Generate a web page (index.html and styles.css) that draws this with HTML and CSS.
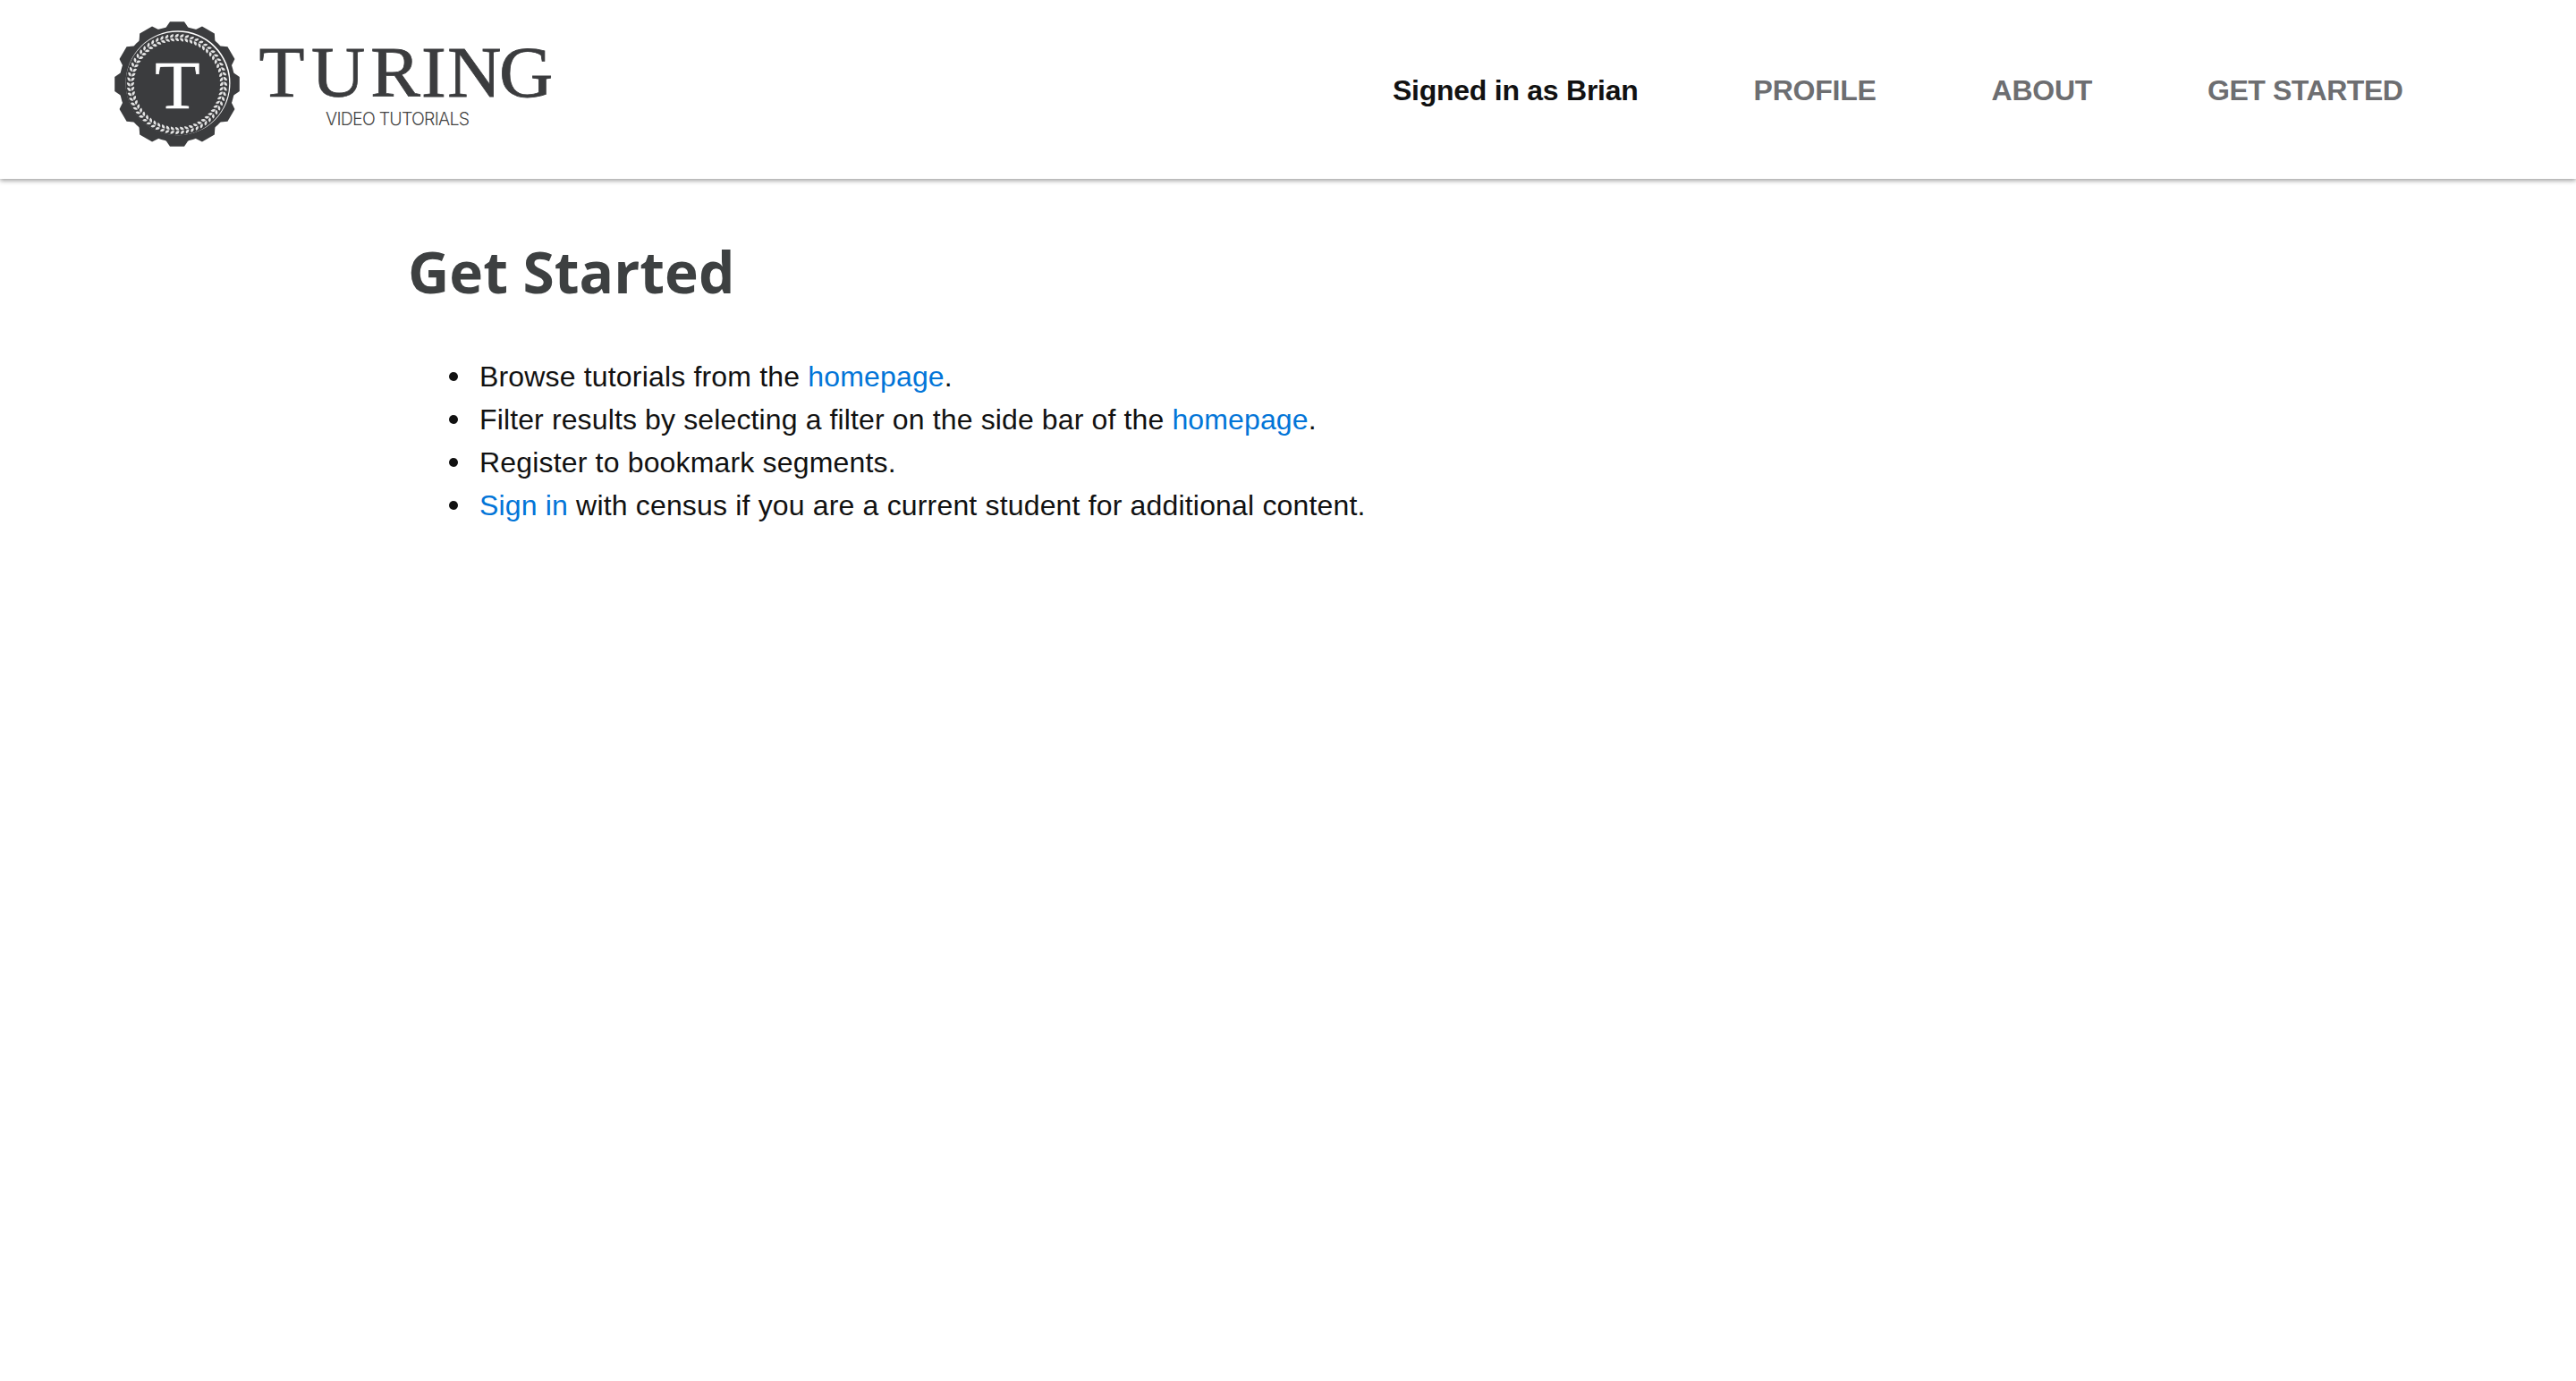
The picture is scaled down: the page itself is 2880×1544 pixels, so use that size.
FILE: index.html
```html
<!DOCTYPE html>
<html lang="en">
<head>
<meta charset="utf-8">
<title>Turing Video Tutorials</title>
<link rel="stylesheet" href="styles.css">
</head>
<body>
<header class="header">
  <a class="logo">
    <svg class="logo-art" width="496" height="150" viewBox="0 0 496 150" role="img" aria-label="Turing Video Tutorials">
      <defs>
        <path id="tooth" d="M-12.4 -63.3L-8 -69.8H8L12.4 -63.3V0H-12.4Z"/>
        <g id="teeth3"><use href="#tooth"/><use href="#tooth" transform="rotate(30)"/><use href="#tooth" transform="rotate(60)"/></g>
        <path id="leaf" d="M-2.4 -52.2Q-2.6 -55.6 1.6 -56.2Q2.4 -54 .2 -52.6ZM-2.4 -51.6Q-1.6 -48 2 -47.9Q2.4 -50.4 .4 -51.6Z"/>
        <g id="leaves5"><use href="#leaf"/><use href="#leaf" transform="rotate(6)"/><use href="#leaf" transform="rotate(12)"/><use href="#leaf" transform="rotate(18)"/><use href="#leaf" transform="rotate(24)"/></g>
        <g id="leaves15"><use href="#leaves5"/><use href="#leaves5" transform="rotate(30)"/><use href="#leaves5" transform="rotate(60)"/></g>
      </defs>
      <g transform="translate(70 70)">
        <g class="ink">
          <circle r="64.5"/>
          <use href="#teeth3"/><use href="#teeth3" transform="rotate(90)"/><use href="#teeth3" transform="rotate(180)"/><use href="#teeth3" transform="rotate(270)"/>
        </g>
        <circle class="paper" cx="1" cy="-1.2" r="58.5"/>
        <circle class="ink" cx=".3" cy="-.4" r="57.9"/>
        <g class="leaves">
          <use href="#leaves15"/><use href="#leaves15" transform="rotate(90)"/><use href="#leaves15" transform="rotate(180)"/><use href="#leaves15" transform="rotate(270)"/>
        </g>
        <text class="seal-letter" transform="translate(.5 27) scale(1.07 1)" text-anchor="middle">T</text>
      </g>
      <text class="wordmark" transform="translate(0 83.5) scale(1.03 1)" x="156.8 213.5 278 333 361.5 417.6" y="0">TURING</text>
      <text class="tagline" x="236" y="115.5" textLength="161">VIDEO TUTORIALS</text>
    </svg>
  </a>
  <nav class="nav">
    <span class="user">Signed in as Brian</span>
    <a>PROFILE</a>
    <a>ABOUT</a>
    <a class="start">GET STARTED</a>
  </nav>
</header>
<main class="content">
  <h1>Get Started</h1>
  <ul>
    <li>Browse tutorials from the <a>homepage</a>.</li>
    <li class="filter">Filter results by selecting a filter on the side bar of the <a>homepage</a>.</li>
    <li>Register to bookmark segments.</li>
    <li><a>Sign in</a> with census if you are a current student for additional content.</li>
  </ul>
</main>
</body>
</html>
```
FILE: styles.css
```css
* { box-sizing: border-box; }
body {
  margin: 0;
  background: #fff;
  color: #111;
  font: 32px/48px "Liberation Sans", Arial, sans-serif;
}
.header {
  display: flex;
  justify-content: space-between;
  height: 200px;
  padding: 24px 193.5px 0 128px;
  box-shadow: 0 2px 5px rgba(0, 0, 0, .38);
}
.logo-art { display: block; overflow: visible; }
.ink { fill: #3b3c3e; }
.paper { fill: #fff; }
.leaves { fill: #e4e4e4; }
.seal-letter {
  fill: #fff;
  stroke: #fff;
  stroke-width: .6;
  font: 77px "Liberation Serif", serif;
}
.wordmark {
  fill: #3b3c3e;
  stroke: #3b3c3e;
  stroke-width: .8;
  font: 81px "Liberation Serif", serif;
}
.tagline { fill: #444; font: 300 19.5px Inter, sans-serif; }
.nav {
  display: flex;
  gap: 129px;
  padding-top: 53px;
  font-weight: 700;
  letter-spacing: -.25px;
}
.nav a { color: #6d6e71; }
.nav .user { color: #111; }
.nav .start { letter-spacing: -.45px; }
.content { padding: 64px 456px 0; }
h1 {
  margin: 0 0 53px;
  color: #3d4041;
  font: 700 64px/80px "Open Sans", sans-serif;
}
ul {
  margin: 0;
  padding-left: 46px;
  list-style: none;
}
li {
  display: block;
  letter-spacing: .17px;
}
li::before {
  content: "";
  display: inline-block;
  width: 10px;
  height: 10px;
  margin-right: 24px;
  border-radius: 50%;
  background: #111;
  vertical-align: 6px;
}
.filter { letter-spacing: .13px; }
li a { color: #0275d8; }
```
